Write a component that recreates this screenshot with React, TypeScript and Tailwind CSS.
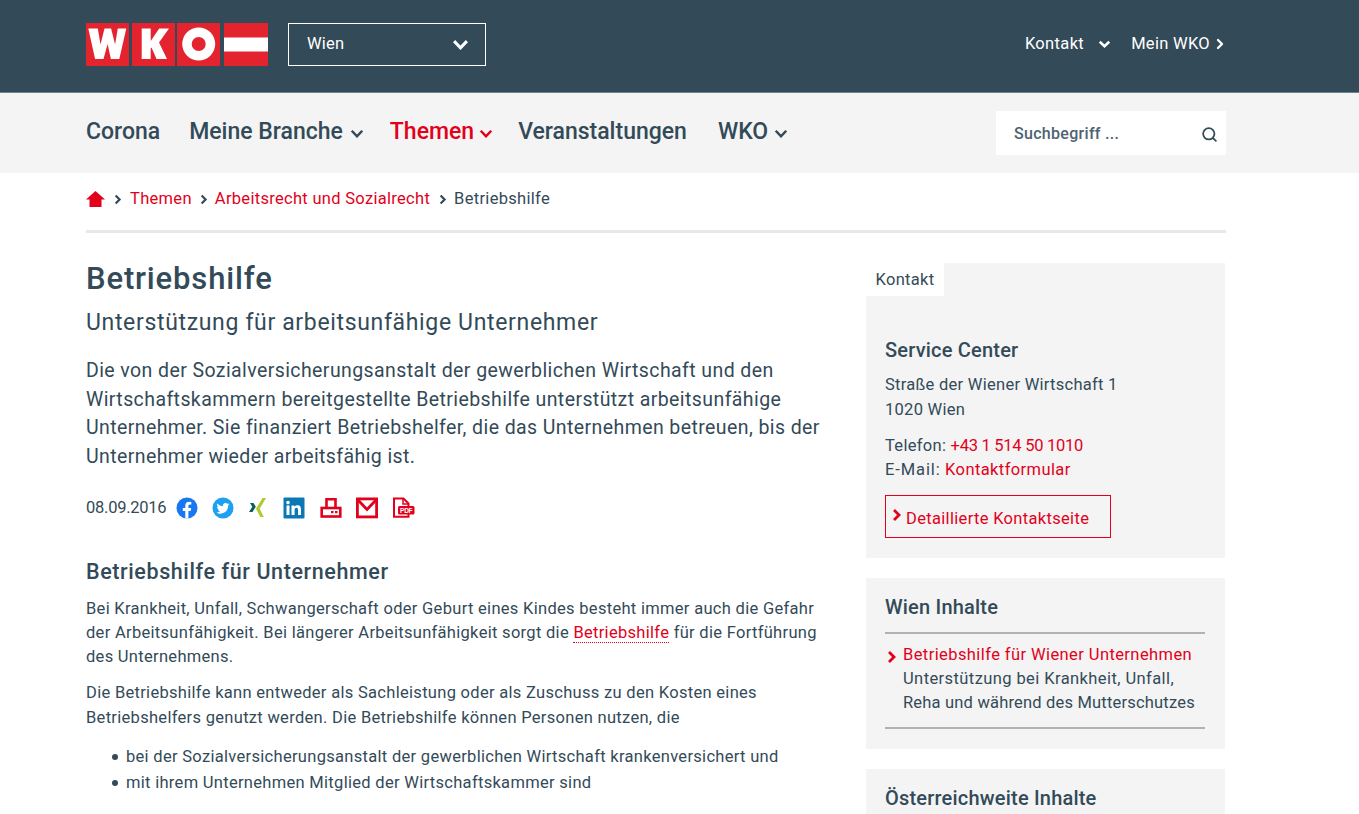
import { ChevronRight, Search } from "lucide-react";

const Logo = () => {
  return (
    <svg width="182" height="43" viewBox="0 0 182 43" className="block">
      <rect x="0" width="43" height="43" fill="#e3242f" />
      <rect x="46" width="43" height="43" fill="#e3242f" />
      <rect x="91" width="43" height="43" fill="#e3242f" />
      <rect x="138" width="44" height="43" fill="#e3242f" />
      <rect x="138" y="14.500" width="44" height="14" fill="#fff" />
      <path d="M2.300 5.500h9.500l2.700 16 4-16h6.600l4 16 2.700-16h8.500l-7 30.500h-8.400L21.600 21l-4.100 15h-8.400z" fill="#fff" />
      <path d="M55.700 5.500h9v12.500l8.500-12.500h9.800L73 19.500 81 36H70.500l-5-11.500-.8 1V36h-9z" fill="#fff" />
      <path fillRule="evenodd" d="M112.700 4.500a16.500 16.500 0 1 1 0 33a16.500 16.500 0 0 1 0-33zm0 9.500a7 7 0 1 0 0 14a7 7 0 0 0 0-14z" fill="#fff" />
    </svg>
  );
};

const Chev = ({ w, h, sw, className }: { w: number; h: number; sw: number; className?: string }) => {
  return (
    <svg width={w} height={h} viewBox={`0 0 ${w} ${h}`} fill="none" stroke="currentColor" strokeWidth={sw} className={className}>
      <path d={`M${sw * 0.7} ${sw * 0.7}L${w / 2} ${h - sw * 0.7}L${w - sw * 0.7} ${sw * 0.7}`} />
    </svg>
  );
};

const ShareIcons = () => {
  return (
    <div className="flex items-center">
      <svg width="22" height="22" viewBox="0 0 22 22" className="ml-[10px]">
        <circle cx="11" cy="11" r="10.500" fill="#1877f2" />
        <path d="M9.300 21.500v-7.600H6.800V11h2.500V8.700c0-2.500 1.500-3.900 3.800-3.900l2.200.2v2.500h-1.300c-1.200 0-1.600.8-1.600 1.500V11h2.800l-.5 2.900h-2.300v7.600z" fill="#fff" />
      </svg>
      <svg width="22" height="22" viewBox="0 0 22 22" className="ml-[14px]">
        <circle cx="11" cy="11" r="10.500" fill="#1da1f2" />
        <path d="M17.500 7.200c-.5.200-1 .4-1.500.4.500-.3 1-.8 1.200-1.400-.5.300-1.100.5-1.700.6a2.700 2.700 0 0 0-4.600 2.400c-2.200-.1-4.200-1.200-5.500-2.800-.7 1.200-.4 2.800.8 3.600-.4 0-.8-.1-1.200-.3 0 1.300.9 2.400 2.100 2.700-.4.100-.8.100-1.200 0 .3 1.100 1.300 1.800 2.500 1.900a5.400 5.400 0 0 1-4 1.100 7.600 7.600 0 0 0 11.700-6.700c.6-.4 1-.9 1.400-1.500z" fill="#fff" />
      </svg>
      <svg width="18" height="22" viewBox="0 0 18 22" className="ml-[15px]">
        <path d="M1 6h3.500l2.300 3.800L3.500 15H0l3.300-5.200z" fill="#0a5f5c" />
        <path d="M13.500 1H17l-6.300 10.800L14.800 20h-3.500L7 11.800z" fill="#b3c832" />
      </svg>
      <svg width="22" height="22" viewBox="0 0 22 22" className="ml-[16px]">
        <rect x="0.500" y="0.500" width="21" height="21" rx="1" fill="#0c77b5" />
        <path d="M3.500 8.500h3v9.500h-3zM5 3.800a1.800 1.800 0 1 1 0 3.600a1.800 1.800 0 0 1 0-3.600zM8.500 8.500h2.900v1.300c.5-.9 1.600-1.600 3-1.600 3 0 3.600 2 3.600 4.500V18h-3v-4.800c0-1.200 0-2.500-1.500-2.500s-1.900 1.200-1.900 2.400V18h-3.100z" fill="#fff" />
      </svg>
      <svg width="22" height="22" viewBox="0 0 22 22" fill="none" stroke="#e2001a" strokeWidth="2.600" className="ml-[15px]">
        <path d="M6.500 11V2.300h9V11" />
        <rect x="1.700" y="11" width="18.600" height="8.500" />
        <rect x="11" y="14" width="2.500" height="2.200" fill="#e2001a" stroke="none" />
        <rect x="15" y="14" width="2.500" height="2.200" fill="#e2001a" stroke="none" />
      </svg>
      <svg width="22" height="22" viewBox="0 0 22 22" fill="none" stroke="#e2001a" strokeWidth="2.800" className="ml-[14px]">
        <rect x="1.400" y="1.900" width="19.200" height="18" />
        <path d="M2 3l9 9.500L20 3" />
      </svg>
      <svg width="23" height="22" viewBox="0 0 23 22" className="ml-[14px]">
        <path d="M2 1.500h9.500l5 5v13.300H2z" fill="none" stroke="#e2001a" strokeWidth="2" />
        <path d="M11 1.500v5.500h5.500" fill="none" stroke="#e2001a" strokeWidth="1.500" />
        <rect x="6" y="9" width="16.500" height="8.500" rx="1.500" fill="#e2001a" />
        <text x="14.200" y="15.500" textAnchor="middle" fontSize="6.500" fontWeight="700" fill="#fff" fontFamily="Liberation Sans, sans-serif">PDF</text>
      </svg>
    </div>
  );
};

const Arrow = ({ className }: { className: string }) => {
  return (
    <svg width="10" height="14" viewBox="0 0 10 14" fill="none" stroke="currentColor" strokeWidth="2.800" className={className}>
      <path d="M2 2l5 5-5 5" />
    </svg>
  );
};

export default function App() {
  return (
    <div className="h-screen overflow-hidden bg-white font-['Roboto',sans-serif] text-[#334a58]">
      {/* Header */}
      <header className="h-[93px] bg-[#334a58] border-b border-[#6d8290]">
        <div className="w-[1140px] ml-[86px] h-[92px] flex items-start pt-[23px]">
          <Logo />
          <div className="ml-[20px] w-[198px] h-[43px] border border-white flex items-center justify-between pl-[18px] pr-[16px] text-white text-[16.500px] tracking-[0.2px]">
            <span>Wien</span>
            <Chev w={17} h={11} sw={3} />
          </div>
          <div className="ml-auto flex items-center h-[42px] text-white text-[16.500px] tracking-[0.3px]">
            <span className="tracking-[0.35px]">Kontakt</span>
            <Chev w={13} h={8} sw={2.500} className="ml-[14px]" />
            <span className="ml-[20px]">Mein WKO</span>
            <ChevronRight className="w-[16px] h-[18px] ml-[2px] mr-[-2px]" strokeWidth={3.500} />
          </div>
        </div>
      </header>

      {/* Navigation */}
      <nav className="h-[80px] bg-[#f4f4f4]">
        <div className="w-[1140px] ml-[86px] h-full flex items-start pt-[18px]">
          <div className="flex items-center h-[43px] text-[23px] font-medium">
            <span>Corona</span>
            <span className="ml-[29px]">Meine Branche</span>
            <Chev w={14} h={9} sw={2.500} className="ml-[7px] mt-[2px]" />
            <span className="ml-[26px] text-[#e2001a]">Themen</span>
            <Chev w={14} h={9} sw={2.500} className="ml-[5px] mt-[2px] text-[#e2001a]" />
            <span className="ml-[25px]">Veranstaltungen</span>
            <span className="ml-[31px]">WKO</span>
            <Chev w={14} h={9} sw={2.500} className="ml-[6px] mt-[2px]" />
          </div>
          <div className="ml-auto w-[230px] h-[44px] bg-white flex items-center justify-between pl-[18px] pr-[8px] pt-[2px] text-[16px] font-medium text-[#4d6371] tracking-[0.3px]">
            <span>Suchbegriff ...</span>
            <Search className="w-[17px] h-[17px] text-[#334a58]" strokeWidth={2.500} />
          </div>
        </div>
      </nav>

      <div className="w-[1140px] ml-[86px]">
        {/* Breadcrumb */}
        <div className="h-[57px] border-b-[3px] border-[#e8e8e8] box-content">
          <div className="flex items-center h-[52px] text-[16.500px] tracking-[0.3px]">
            <svg width="19" height="16" viewBox="0 0 19 16" fill="#e2001a">
              <path d="M9.500 0L19 8.500h-3.500V16h-12V8.500H0z" />
            </svg>
            <Arrow className="ml-[9px] w-[8px] h-[11px]" />
            <span className="ml-[8px] text-[#e2001a]">Themen</span>
            <Arrow className="ml-[8px] w-[8px] h-[11px]" />
            <span className="ml-[7px] text-[#e2001a]">Arbeitsrecht und Sozialrecht</span>
            <Arrow className="ml-[9px] w-[8px] h-[11px]" />
            <span className="ml-[7px]">Betriebshilfe</span>
          </div>
        </div>

        <div className="flex justify-between pt-[31px]">
          {/* Main content */}
          <main className="w-[750px]">
            <h1 className="text-[31px] leading-[30px] font-medium tracking-[0.85px]">Betriebshilfe</h1>
            <p className="mt-[14px] text-[23px] leading-[30px] tracking-[0.66px]">Unterstützung für arbeitsunfähige Unternehmer</p>
            <p className="mt-[19px] text-[19.500px] leading-[28.500px] tracking-[0.41px]">
              Die von der Sozialversicherungsanstalt der gewerblichen Wirtschaft und den<br />
              Wirtschaftskammern bereitgestellte Betriebshilfe unterstützt arbeitsunfähige<br />
              Unternehmer. Sie finanziert Betriebshelfer, die das Unternehmen betreuen, bis der<br />
              Unternehmer wieder arbeitsfähig ist.
            </p>
            <div className="mt-[25px] flex items-center h-[24px] text-[16.500px] tracking-[-0.25px]">
              <span>08.09.2016</span>
              <ShareIcons />
            </div>
            <h2 className="mt-[37px] text-[21.500px] leading-[30px] font-medium tracking-[0.6px]">Betriebshilfe für Unternehmer</h2>
            <p className="mt-[10px] text-[16.500px] leading-[24px] tracking-[0.3px]">
              Bei Krankheit, Unfall, Schwangerschaft oder Geburt eines Kindes besteht immer auch die Gefahr<br />
              der Arbeitsunfähigkeit. Bei längerer Arbeitsunfähigkeit sorgt die{" "}
              <span className="text-[#e2001a] border-b border-dotted border-[#e2001a]">Betriebshilfe</span> für die Fortführung<br />
              des Unternehmens.
            </p>
            <p className="mt-[11px] text-[16.500px] leading-[25px] tracking-[0.3px]">
              Die Betriebshilfe kann entweder als Sachleistung oder als Zuschuss zu den Kosten eines<br />
              Betriebshelfers genutzt werden. Die Betriebshilfe können Personen nutzen, die
            </p>
            <ul className="mt-[14px] text-[16.500px] leading-[26px] tracking-[0.3px]">
              <li className="flex items-center">
                <span className="ml-[26px] mr-[8px] w-[6px] h-[6px] rounded-full bg-[#334a58]" />
                bei der Sozialversicherungsanstalt der gewerblichen Wirtschaft krankenversichert und
              </li>
              <li className="flex items-center">
                <span className="ml-[26px] mr-[8px] w-[6px] h-[6px] rounded-full bg-[#334a58]" />
                mit ihrem Unternehmen Mitglied der Wirtschaftskammer sind
              </li>
            </ul>
          </main>

          {/* Sidebar */}
          <aside className="w-[359px] mr-[1px] mt-[-1px]">
            <div className="bg-[#f4f4f4] h-[295px]">
              <div className="w-[78px] h-[33px] bg-white flex items-center justify-center pt-[2px] text-[16.500px] tracking-[0.3px]">Kontakt</div>
              <div className="px-[19px] pt-[39px]">
                <h3 className="text-[20px] leading-[30px] font-medium tracking-[0.2px]">Service Center</h3>
                <p className="mt-[7px] text-[16.500px] leading-[25px] tracking-[0.27px]">
                  Straße der Wiener Wirtschaft 1<br />
                  1020 Wien
                </p>
                <p className="mt-[12px] text-[16.500px] leading-[24px] tracking-[0.3px]">
                  Telefon: <span className="text-[#e2001a] tracking-[-0.27px]">+43 1 514 50 1010</span><br />
                  <span className="tracking-[0.9px]">E-Mail:</span> <span className="text-[#e2001a] tracking-[0.4px]">Kontaktformular</span>
                </p>
                <div className="mt-[13px] w-[226px] h-[43px] border border-[#e2001a] flex items-center pl-[6px] text-[16.500px] text-[#e2001a] tracking-[0.32px]">
                  <Arrow className="w-[10px] h-[14px] mr-[4px] mt-[-3px]" />
                  <span className="pt-[5px]">Detaillierte Kontaktseite</span>
                </div>
              </div>
            </div>

            <div className="mt-[20px] bg-[#f4f4f4] h-[171px] pl-[19px] pr-[20px] pt-[14px]">
              <h3 className="text-[20px] leading-[30px] font-medium tracking-[0.2px] pb-[10px] border-b-2 border-[#b2b2b2]">Wien Inhalte</h3>
              <div className="flex mt-[9px] pb-[12px] border-b-2 border-[#b2b2b2] text-[16.500px] leading-[24px] tracking-[0.41px]">
                <Arrow className="w-[10px] h-[14px] mt-[7px] ml-[2px] mr-[6px] shrink-0 text-[#e2001a]" />
                <div>
                  <div className="text-[#e2001a]">Betriebshilfe für Wiener Unternehmen</div>
                  Unterstützung bei Krankheit, Unfall,<br />
                  <span className="tracking-[0.19px]">Reha und während des Mutterschutzes</span>
                </div>
              </div>
            </div>

            <div className="mt-[20px] bg-[#f4f4f4] h-[120px] px-[19px] pt-[14px]">
              <h3 className="text-[20px] leading-[30px] font-medium tracking-[0.2px]">Österreichweite Inhalte</h3>
            </div>
          </aside>
        </div>
      </div>
    </div>
  );
}
